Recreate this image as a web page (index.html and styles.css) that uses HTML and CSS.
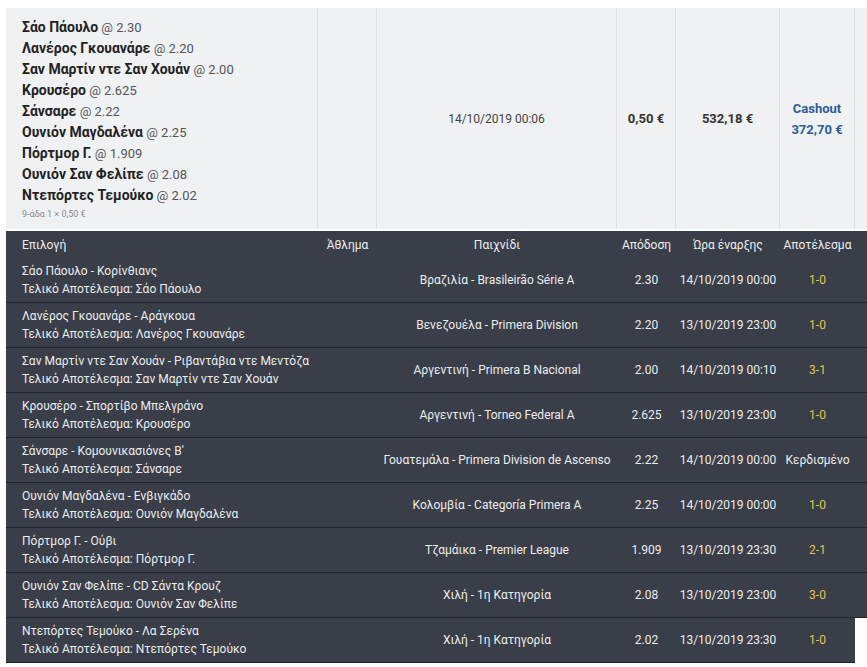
FILE: index.html
```html
<!DOCTYPE html>
<html lang="el">
<head>
<meta charset="utf-8">
<link rel="stylesheet" href="styles.css">
</head>
<body>
<div class="bet">
  <div class="cell sel">
    <div class="pick"><b>Σάο Πάουλο</b> @ 2.30</div>
    <div class="pick"><b>Λανέρος Γκουανάρε</b> @ 2.20</div>
    <div class="pick"><b>Σαν Μαρτίν ντε Σαν Χουάν</b> @ 2.00</div>
    <div class="pick"><b>Κρουσέρο</b> @ 2.625</div>
    <div class="pick"><b>Σάνσαρε</b> @ 2.22</div>
    <div class="pick"><b>Ουνιόν Μαγδαλένα</b> @ 2.25</div>
    <div class="pick"><b>Πόρτμορ Γ.</b> @ 1.909</div>
    <div class="pick"><b>Ουνιόν Σαν Φελίπε</b> @ 2.08</div>
    <div class="pick"><b>Ντεπόρτες Τεμούκο</b> @ 2.02</div>
    <div class="type">9-άδα 1 × 0,50 €</div>
  </div>
  <div class="cell"></div>
  <div class="cell center date">14/10/2019 00:06</div>
  <div class="cell center strong">0,50 €</div>
  <div class="cell center strong">532,18 €</div>
  <div class="cell center cash"><span>Cashout</span><span>372,70 €</span></div>
  <div class="cell end"></div>
</div>

<div class="details">
  <div class="row head">
    <div class="c first">Επιλογή</div>
    <div class="c">Άθλημα</div>
    <div class="c">Παιχνίδι</div>
    <div class="c">Απόδοση</div>
    <div class="c">Ώρα έναρξης</div>
    <div class="c">Αποτέλεσμα</div>
    <div class="c"></div>
  </div>
  <div class="row">
    <div class="c first"><span>Σάο Πάουλο - Κορίνθιανς</span><span>Τελικό Αποτέλεσμα: Σάο Πάουλο</span></div>
    <div class="c"></div>
    <div class="c">Βραζιλία - Brasileirão Série A</div>
    <div class="c">2.30</div>
    <div class="c">14/10/2019 00:00</div>
    <div class="c res">1-0</div>
    <div class="c"></div>
  </div>
  <div class="row">
    <div class="c first"><span>Λανέρος Γκουανάρε - Αράγκουα</span><span>Τελικό Αποτέλεσμα: Λανέρος Γκουανάρε</span></div>
    <div class="c"></div>
    <div class="c">Βενεζουέλα - Primera Division</div>
    <div class="c">2.20</div>
    <div class="c">13/10/2019 23:00</div>
    <div class="c res">1-0</div>
    <div class="c"></div>
  </div>
  <div class="row">
    <div class="c first"><span>Σαν Μαρτίν ντε Σαν Χουάν - Ριβαντάβια ντε Μεντόζα</span><span>Τελικό Αποτέλεσμα: Σαν Μαρτίν ντε Σαν Χουάν</span></div>
    <div class="c"></div>
    <div class="c">Αργεντινή - Primera B Nacional</div>
    <div class="c">2.00</div>
    <div class="c">14/10/2019 00:10</div>
    <div class="c res">3-1</div>
    <div class="c"></div>
  </div>
  <div class="row">
    <div class="c first"><span>Κρουσέρο - Σπορτίβο Μπελγράνο</span><span>Τελικό Αποτέλεσμα: Κρουσέρο</span></div>
    <div class="c"></div>
    <div class="c">Αργεντινή - Torneo Federal A</div>
    <div class="c">2.625</div>
    <div class="c">13/10/2019 23:00</div>
    <div class="c res">1-0</div>
    <div class="c"></div>
  </div>
  <div class="row">
    <div class="c first"><span>Σάνσαρε - Κομουνικασιόνες Β'</span><span>Τελικό Αποτέλεσμα: Σάνσαρε</span></div>
    <div class="c"></div>
    <div class="c">Γουατεμάλα - Primera Division de Ascenso</div>
    <div class="c">2.22</div>
    <div class="c">14/10/2019 00:00</div>
    <div class="c">Κερδισμένο</div>
    <div class="c"></div>
  </div>
  <div class="row">
    <div class="c first"><span>Ουνιόν Μαγδαλένα - Ενβιγκάδο</span><span>Τελικό Αποτέλεσμα: Ουνιόν Μαγδαλένα</span></div>
    <div class="c"></div>
    <div class="c">Κολομβία - Categoría Primera A</div>
    <div class="c">2.25</div>
    <div class="c">14/10/2019 00:00</div>
    <div class="c res">1-0</div>
    <div class="c"></div>
  </div>
  <div class="row">
    <div class="c first"><span>Πόρτμορ Γ. - Ούβι</span><span>Τελικό Αποτέλεσμα: Πόρτμορ Γ.</span></div>
    <div class="c"></div>
    <div class="c">Τζαμάικα - Premier League</div>
    <div class="c">1.909</div>
    <div class="c">13/10/2019 23:30</div>
    <div class="c res">2-1</div>
    <div class="c"></div>
  </div>
  <div class="row">
    <div class="c first"><span>Ουνιόν Σαν Φελίπε - CD Σάντα Κρουζ</span><span>Τελικό Αποτέλεσμα: Ουνιόν Σαν Φελίπε</span></div>
    <div class="c"></div>
    <div class="c">Χιλή - 1η Κατηγορία</div>
    <div class="c">2.08</div>
    <div class="c">13/10/2019 23:00</div>
    <div class="c res">3-0</div>
    <div class="c"></div>
  </div>
  <div class="row last">
    <div class="c first"><span>Ντεπόρτες Τεμούκο - Λα Σερένα</span><span>Τελικό Αποτέλεσμα: Ντεπόρτες Τεμούκο</span></div>
    <div class="c"></div>
    <div class="c">Χιλή - 1η Κατηγορία</div>
    <div class="c">2.02</div>
    <div class="c">13/10/2019 23:30</div>
    <div class="c res">1-0</div>
  </div>
</div>
</body>
</html>
```

FILE: styles.css
```css
html, body {
  background: #ffffff;
}
body {
  margin: 8px 0 0 6px;
  font-family: Roboto, "Liberation Sans", sans-serif;
  overflow: hidden;
}

.bet {
  display: grid;
  grid-template-columns: 312px 59px 240px 59px 104px 75px 1fr;
  background: #f0f1f3;
  height: 221px;
}
.cell {
  border-right: 1px solid #dfe0e3;
  font-size: 12px;
  color: #333;
}
.cell.end {
  border-right: none;
}
.sel {
  padding: 9px 0 0 16px;
}
.pick {
  font-size: 13px;
  line-height: 21px;
  color: #555;
}
.pick b {
  color: #222;
  font-weight: 700;
  font-size: 14px;
}
.type {
  font-size: 9px;
  color: #888;
  line-height: 14px;
  margin-top: 1px;
}
.center {
  display: flex;
  flex-direction: column;
  align-items: center;
  justify-content: center;
}
.date {
  color: #444;
  font-size: 12px;
}
.strong {
  font-weight: 700;
  font-size: 13px;
  color: #333;
}
.cash {
  font-weight: 700;
  font-size: 13px;
  color: #2d5c9b;
  line-height: 21px;
}

.details {
  margin-top: 2px;
}
.row {
  display: grid;
  grid-template-columns: 312px 59px 240px 59px 104px 75px 1fr;
  background: #3a3e48;
  color: #eceded;
  font-size: 12px;
  height: 44px;
  border-bottom: 1px solid #22252a;
}
.row.head {
  height: 27px;
  border-bottom: none;
}
.row.last {
  grid-template-columns: 312px 59px 240px 59px 104px 75px;
  width: 849px;
}
.c {
  display: flex;
  flex-direction: column;
  align-items: center;
  justify-content: center;
  white-space: nowrap;
  line-height: 18px;
}
.c.first {
  align-items: flex-start;
  padding-left: 16px;
}
.res {
  color: #e3c44a;
}
```
